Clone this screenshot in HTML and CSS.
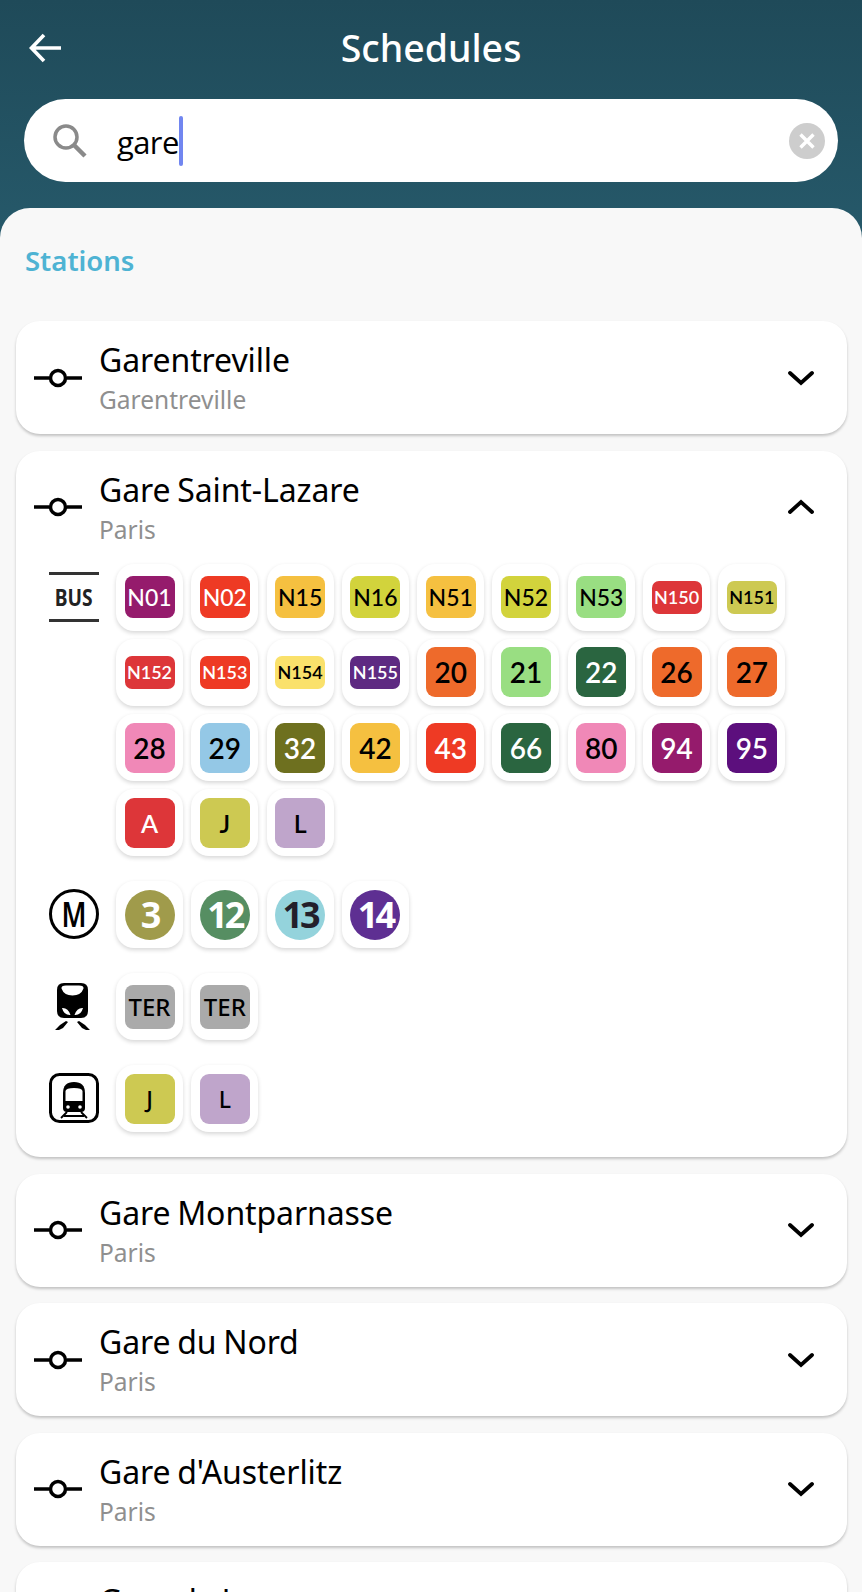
FILE: index.html
```html
<!DOCTYPE html>
<html lang="en">
<head>
  <meta charset="UTF-8">
  <title>Schedules</title>
  <link rel="stylesheet" href="styles.css">
</head>
<body>

<!-- header -->
<header class="top">
  <div class="top-bar">
    <svg class="back" viewBox="0 0 34 30"><path d="M32 15H3M15 2 2.500 15 15 28" fill="none" stroke="#fff" stroke-width="3.600"/></svg>
    <h1>Schedules</h1>
  </div>
  <div class="search">
    <svg class="search-icon" viewBox="0 0 34 34"><circle cx="13" cy="13" r="11" fill="none" stroke="#8a8a8a" stroke-width="3.500"/><path d="M21 21 32 32" stroke="#8a8a8a" stroke-width="4.500"/></svg>
    <span class="search-text">gare</span><span class="caret"></span>
    <span class="clear"><svg viewBox="0 0 36 36"><path d="M11.500 11.500 24.500 24.500M24.500 11.500 11.500 24.500" stroke="#fff" stroke-width="3.400"/></svg></span>
  </div>
</header>

<main class="sheet">
  <h2>Stations</h2>

  <section class="card">
    <div class="card-head">
      <svg class="stop" viewBox="0 0 48 20"><path d="M0 10H15M33 10H48" stroke="#000" stroke-width="3.500"/><circle cx="24" cy="10" r="7.500" fill="none" stroke="#000" stroke-width="3.500"/></svg>
      <div class="names"><div class="name">Garentreville</div><div class="city">Garentreville</div></div>
      <svg class="chevron" viewBox="0 0 26 16"><path d="M2 3 13 13 24 3" fill="none" stroke="#000" stroke-width="3.800" stroke-linecap="round"/></svg>
    </div>
  </section>

  <section class="card">
    <div class="card-head">
      <svg class="stop" viewBox="0 0 48 20"><path d="M0 10H15M33 10H48" stroke="#000" stroke-width="3.500"/><circle cx="24" cy="10" r="7.500" fill="none" stroke="#000" stroke-width="3.500"/></svg>
      <div class="names"><div class="name">Gare Saint-Lazare</div><div class="city">Paris</div></div>
      <svg class="chevron" viewBox="0 0 26 16"><path d="M2 13 13 3 24 13" fill="none" stroke="#000" stroke-width="3.800" stroke-linecap="round"/></svg>
    </div>

    <div class="lines">
      <div class="mode">
        <div class="mode-bus"><span>BUS</span></div>
        <div class="tiles">
          <div class="tile"><span class="badge purple wh">N01</span></div>
          <div class="tile"><span class="badge red wh">N02</span></div>
          <div class="tile"><span class="badge amber">N15</span></div>
          <div class="tile"><span class="badge lime">N16</span></div>
          <div class="tile"><span class="badge amber">N51</span></div>
          <div class="tile"><span class="badge lime">N52</span></div>
          <div class="tile"><span class="badge green">N53</span></div>
          <div class="tile"><span class="badge low crimson wh">N150</span></div>
          <div class="tile"><span class="badge low olive">N151</span></div>
          <div class="tile"><span class="badge low crimson wh">N152</span></div>
          <div class="tile"><span class="badge low red wh">N153</span></div>
          <div class="tile"><span class="badge low yellow">N154</span></div>
          <div class="tile"><span class="badge low violet wh">N155</span></div>
          <div class="tile"><span class="badge num orange">20</span></div>
          <div class="tile"><span class="badge num green">21</span></div>
          <div class="tile"><span class="badge num forest wh">22</span></div>
          <div class="tile"><span class="badge num orange">26</span></div>
          <div class="tile"><span class="badge num orange">27</span></div>
          <div class="tile"><span class="badge num pink">28</span></div>
          <div class="tile"><span class="badge num sky">29</span></div>
          <div class="tile"><span class="badge num moss wh">32</span></div>
          <div class="tile"><span class="badge num amber">42</span></div>
          <div class="tile"><span class="badge num red wh">43</span></div>
          <div class="tile"><span class="badge num forest wh">66</span></div>
          <div class="tile"><span class="badge num pink">80</span></div>
          <div class="tile"><span class="badge num purple wh">94</span></div>
          <div class="tile"><span class="badge num plum wh">95</span></div>
          <div class="tile"><span class="badge num letter crimson wh">A</span></div>
          <div class="tile"><span class="badge num letter olive">J</span></div>
          <div class="tile"><span class="badge num letter lilac">L</span></div>
        </div>
      </div>

      <div class="mode">
        <svg class="mode-icon" viewBox="0 0 50 50"><circle cx="25" cy="25" r="23.500" fill="none" stroke="#000" stroke-width="3"/><text x="25" y="37.500" text-anchor="middle" textLength="25" lengthAdjust="spacingAndGlyphs" class="metro-m">M</text></svg>
        <div class="tiles">
          <div class="tile"><span class="disc m3">3</span></div>
          <div class="tile"><span class="disc m12">12</span></div>
          <div class="tile"><span class="disc m13">13</span></div>
          <div class="tile"><span class="disc m14">14</span></div>
        </div>
      </div>

      <div class="mode">
        <svg class="mode-icon" viewBox="0 0 50 50">
          <path d="M8 9Q8 2 15 2H32Q39 2 39 9V30Q39 37 32 37H15Q8 37 8 30Z" fill="#000"/>
          <path d="M17 4.500H30Q35 4.500 34.500 7.500Q32 14.500 23.500 14.500Q15 14.500 12.500 7.500Q12 4.500 17 4.500ZM13 27Q19 26.500 21.500 34Q15 34.500 13 27ZM34 27Q28 26.500 25.500 34Q32 34.500 34 27Z" fill="#fff"/>
          <path d="M6 49 11 44 17 40 19 41 14 47 10 49ZM41 49 36 44 30 40 28 41 33 47 37 49Z" fill="#000"/>
        </svg>
        <div class="tiles">
          <div class="tile"><span class="badge ter grey">TER</span></div>
          <div class="tile"><span class="badge ter grey">TER</span></div>
        </div>
      </div>

      <div class="mode">
        <svg class="mode-icon" viewBox="0 0 50 50">
          <rect x="1.500" y="1.500" width="47" height="47" rx="9" fill="none" stroke="#000" stroke-width="3"/>
          <path d="M14 20Q14 9 25 9Q36 9 36 20V35Q36 39 32 39H18Q14 39 14 35Z" fill="#000"/>
          <path d="M16.500 18Q17 15 25 15Q33 15 33.500 18V28H16.500Z" fill="#fff"/>
          <circle cx="19" cy="34" r="1.800" fill="#fff"/><circle cx="31" cy="34" r="1.800" fill="#fff"/>
          <path d="M18 39 12 45M32 39 38 45M15 43H35" fill="none" stroke="#000" stroke-width="1.800"/>
        </svg>
        <div class="tiles">
          <div class="tile"><span class="badge num letter-sm olive">J</span></div>
          <div class="tile"><span class="badge num letter-sm lilac">L</span></div>
        </div>
      </div>
    </div>
  </section>

  <section class="card">
    <div class="card-head">
      <svg class="stop" viewBox="0 0 48 20"><path d="M0 10H15M33 10H48" stroke="#000" stroke-width="3.500"/><circle cx="24" cy="10" r="7.500" fill="none" stroke="#000" stroke-width="3.500"/></svg>
      <div class="names"><div class="name">Gare Montparnasse</div><div class="city">Paris</div></div>
      <svg class="chevron" viewBox="0 0 26 16"><path d="M2 3 13 13 24 3" fill="none" stroke="#000" stroke-width="3.800" stroke-linecap="round"/></svg>
    </div>
  </section>

  <section class="card">
    <div class="card-head">
      <svg class="stop" viewBox="0 0 48 20"><path d="M0 10H15M33 10H48" stroke="#000" stroke-width="3.500"/><circle cx="24" cy="10" r="7.500" fill="none" stroke="#000" stroke-width="3.500"/></svg>
      <div class="names"><div class="name">Gare du Nord</div><div class="city">Paris</div></div>
      <svg class="chevron" viewBox="0 0 26 16"><path d="M2 3 13 13 24 3" fill="none" stroke="#000" stroke-width="3.800" stroke-linecap="round"/></svg>
    </div>
  </section>

  <section class="card">
    <div class="card-head">
      <svg class="stop" viewBox="0 0 48 20"><path d="M0 10H15M33 10H48" stroke="#000" stroke-width="3.500"/><circle cx="24" cy="10" r="7.500" fill="none" stroke="#000" stroke-width="3.500"/></svg>
      <div class="names"><div class="name">Gare d'Austerlitz</div><div class="city">Paris</div></div>
      <svg class="chevron" viewBox="0 0 26 16"><path d="M2 3 13 13 24 3" fill="none" stroke="#000" stroke-width="3.800" stroke-linecap="round"/></svg>
    </div>
  </section>

  <section class="card">
    <div class="card-head">
      <svg class="stop" viewBox="0 0 48 20"><path d="M0 10H15M33 10H48" stroke="#000" stroke-width="3.500"/><circle cx="24" cy="10" r="7.500" fill="none" stroke="#000" stroke-width="3.500"/></svg>
      <div class="names"><div class="name">Gare de Lyon</div><div class="city">Paris</div></div>
      <svg class="chevron" viewBox="0 0 26 16"><path d="M2 3 13 13 24 3" fill="none" stroke="#000" stroke-width="3.800" stroke-linecap="round"/></svg>
    </div>
  </section>
</main>

</body>
</html>
```

FILE: styles.css
```css
html, body { margin: 0; height: 1592px; overflow: hidden; }
body { font-family: "Noto Sans", sans-serif; background: linear-gradient(#1f4a59, #26596a 240px); }

.top { height: 208px; box-sizing: border-box; padding: 0 24px; }
.top-bar { height: 99px; display: flex; align-items: center; justify-content: center; position: relative; }
.back { position: absolute; left: 5px; top: 33px; width: 34px; height: 30px; }
h1 { margin: 0 0 5px; font-size: 37.500px; font-weight: 500; color: #fff; }

.search {
  height: 83px; background: #fff; border-radius: 42px;
  display: flex; align-items: center; padding: 0 13px 0 29px; width: 814px; box-sizing: border-box;
}
.search-icon { width: 34px; height: 34px; margin-right: 30px; }
.search-text { font-family: "Open Sans", sans-serif; font-size: 31px; color: #000; margin-top: 3px; letter-spacing: -.6px; }
.caret { width: 4px; height: 50px; background: #7186f0; border-radius: 2px; }
.clear { width: 36px; height: 36px; border-radius: 50%; background: #cdcdcd; margin-left: auto; }
.clear svg { display: block; }

.sheet {
  height: 1384px; background: #f8f8f8; border-radius: 30px 30px 0 0;
  padding: 0 15px 0 16px; overflow: hidden;
}
h2 { margin: 0; padding: 35px 9px 0; height: 113px; box-sizing: border-box; font-size: 27.500px; font-weight: 600; color: #4eb3d3; line-height: 36px; }

.card { background: #fff; border-radius: 24px; box-shadow: 0 2px 3px rgba(0,0,0,.22); margin-bottom: 16.500px; }
.card-head { height: 113px; display: flex; align-items: center; padding: 0 33px 0 18px; box-sizing: border-box; }
.stop { width: 48px; height: 20px; flex: none; }
.names { margin-left: 17px; flex: 1; padding-top: 3px; }
.name { font-size: 32px; line-height: 42px; color: #000; letter-spacing: -.1px; word-spacing: -1.500px; }
.city { font-size: 24.500px; line-height: 38px; color: #8f8f8f; }
.chevron { width: 26px; height: 16px; }

.lines { padding: 0 0 25px 33px; }
.mode { display: flex; align-items: flex-start; margin-bottom: 25px; }
.mode:last-child { margin-bottom: 0; }
.mode-icon, .mode-bus { width: 50px; height: 50px; margin: 8px 17px 0 0; flex: none; display: block; }
.mode-bus {
  box-sizing: border-box; border-top: 3px solid #333; border-bottom: 3px solid #333;
  text-align: center; font-size: 24px; font-weight: 700; color: #222; line-height: 43px;
}
.mode-bus span { display: inline-block; transform: scaleX(.8); }
.metro-m { font-family: "Noto Sans", sans-serif; font-size: 35px; font-weight: 600; }

.tiles { display: flex; flex-wrap: wrap; gap: 8.300px; width: 680px; }
.tile {
  width: 67px; height: 67px; background: #fff; border-radius: 18px;
  box-shadow: 0 2px 4px rgba(0,0,0,.16);
  display: flex; align-items: center; justify-content: center;
}

.badge {
  width: 50px; height: 42px; border-radius: 8px; color: #000;
  font-family: Lato, sans-serif; font-size: 23px; font-weight: 500;
  display: flex; align-items: center; justify-content: center;
}
.low { height: 33px; font-size: 18px; font-weight: 600; border-radius: 7px; }
.num { height: 50px; font-size: 28px; font-weight: 600; border-radius: 9px; }
.letter { font-size: 25px; }
.letter-sm { font-size: 23px; font-family: "Noto Sans", sans-serif; font-weight: 500; }
.ter { height: 44px; font-family: "Noto Sans", sans-serif; font-size: 24px; }
.wh { color: #fff; }

.purple { background: #951b6c; }
.red { background: #ee3a24; }
.amber { background: #f5c040; }
.lime { background: #d2d33c; }
.green { background: #99de82; }
.crimson { background: #dd3639; }
.olive { background: #cdc952; }
.yellow { background: #fae16b; }
.violet { background: #5e2a82; }
.orange { background: #ee6a2b; }
.forest { background: #2a6540; }
.pink { background: #f088b7; }
.sky { background: #94c8e6; }
.moss { background: #6e701f; }
.plum { background: #5c0f7d; }
.lilac { background: #bfa5cb; }
.grey { background: #aaaaaa; }

.disc {
  width: 50px; height: 50px; border-radius: 50%; color: #fff;
  font-family: "Noto Sans", sans-serif; font-size: 36px; font-weight: 700; letter-spacing: -3px;
  display: flex; align-items: center; justify-content: center;
}
.m3 { background: #a09b4b; }
.m12 { background: #568e62; }
.m13 { background: #94d3dc; color: #231f2b; }
.m14 { background: #5e2f92; }
```
